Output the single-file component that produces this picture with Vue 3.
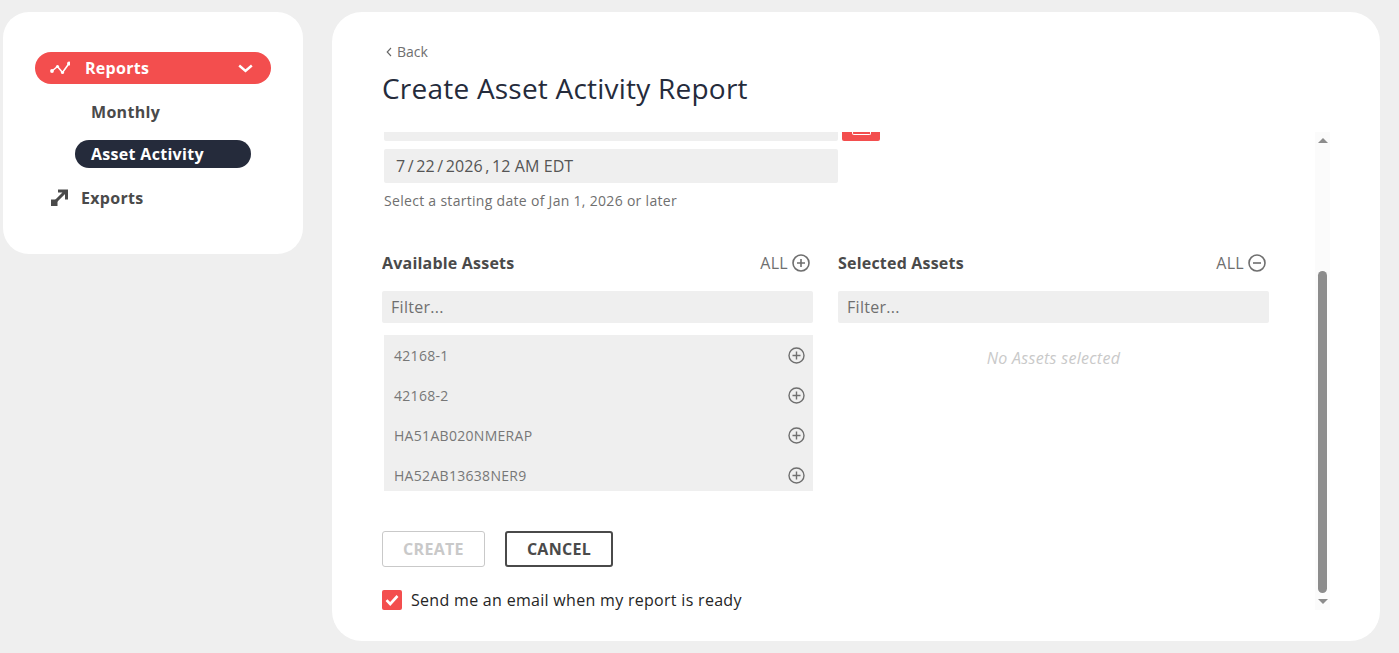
<script setup>
const assets = ['42168-1', '42168-2', 'HA51AB020NMERAP', 'HA52AB13638NER9']
const dateParts = ['7', '/', '22', '/', '2026', ',', '12 AM EDT']
</script>

<template>
  <div class="page">
    <aside class="side">
      <div class="nav-main">
        <svg class="trend" width="20" height="14" viewBox="0 0 20 14">
          <path d="M2 10 7.500 5.500l5 6L19 2.500" fill="none" stroke="#fff" stroke-width="1.600" />
          <circle cx="2" cy="10" r="1.900" fill="#fff" />
          <circle cx="7.500" cy="5.500" r="1.600" fill="#fff" />
          <circle cx="12.500" cy="11.500" r="1.600" fill="#fff" />
          <circle cx="19" cy="2.500" r="1.900" fill="#fff" />
        </svg>
        <span class="nav-main-label">Reports</span>
        <svg class="chev" width="15" height="9" viewBox="0 0 15 9">
          <path d="M1.200 1.500 7.500 7l6.300-5.500" fill="none" stroke="#fff" stroke-width="2.400" />
        </svg>
      </div>
      <div class="sub">Monthly</div>
      <div class="sub active">Asset Activity</div>
      <div class="nav-item">
        <svg width="18" height="18" viewBox="0 0 18 18">
          <rect x="1" y="10.500" width="6.500" height="6.500" fill="#4a4a4a" />
          <path d="M4 14 15.500 2.500M8 2h8.500v8.500" fill="none" stroke="#4a4a4a" stroke-width="3" />
        </svg>
        <span>Exports</span>
      </div>
    </aside>

    <main class="card">
      <header class="head">
        <a class="back">
          <svg width="6" height="10" viewBox="0 0 6 10"><path d="M5 1 1.200 5 5 9" fill="none" stroke="#666" stroke-width="1.100" /></svg>
          <span>Back</span>
        </a>
        <h1>Create Asset Activity Report</h1>
      </header>

      <div class="body">
        <div class="scroll">
          <div class="top-row">
            <div class="clipped-field"></div>
            <div class="cal"><span class="cal-glyph"></span></div>
          </div>
          <div class="date-field">
            <span v-for="(p, i) in dateParts" :key="i">{{ p }}</span>
          </div>
          <p class="hint">Select a starting date of Jan 1, 2026 or later</p>

          <div class="columns">
            <section class="col">
              <div class="col-head">
                <h2>Available Assets</h2>
                <div class="all">
                  <span>ALL</span>
                  <svg width="18" height="18" viewBox="0 0 18 18">
                    <circle cx="9" cy="9" r="8" fill="none" stroke="#6f6f6f" stroke-width="1.600" />
                    <path d="M5 9h8M9 5v8" stroke="#6f6f6f" stroke-width="1.600" />
                  </svg>
                </div>
              </div>
              <div class="filter">Filter...</div>
              <ul class="list">
                <li v-for="a in assets" :key="a">
                  <span>{{ a }}</span>
                  <svg width="17" height="17" viewBox="0 0 17 17">
                    <circle cx="8.500" cy="8.500" r="7.500" fill="none" stroke="#6f6f6f" stroke-width="1.400" />
                    <path d="M4.500 8.500h8M8.500 4.500v8" stroke="#6f6f6f" stroke-width="1.400" />
                  </svg>
                </li>
              </ul>
            </section>
            <section class="col">
              <div class="col-head">
                <h2>Selected Assets</h2>
                <div class="all minus">
                  <span>ALL</span>
                  <svg width="18" height="18" viewBox="0 0 18 18">
                    <circle cx="9" cy="9" r="8" fill="none" stroke="#6f6f6f" stroke-width="1.600" />
                    <path d="M5 9h8" stroke="#6f6f6f" stroke-width="1.600" />
                  </svg>
                </div>
              </div>
              <div class="filter">Filter...</div>
              <div class="empty">No Assets selected</div>
            </section>
          </div>

          <div class="actions">
            <button class="btn create" type="button">CREATE</button>
            <button class="btn cancel" type="button">CANCEL</button>
          </div>
          <label class="check">
            <span class="box">
              <svg width="14" height="12" viewBox="0 0 14 12"><path d="M1.500 6.200 5.200 10 12.500 2" fill="none" stroke="#fff" stroke-width="2.600" /></svg>
            </span>
            <span>Send me an email when my report is ready</span>
          </label>
        </div>

        <div class="bar">
          <span class="arrow up"></span>
          <div class="bar-track"><div class="thumb"></div></div>
          <span class="arrow down"></span>
        </div>
      </div>
    </main>
  </div>
</template>

<style scoped>
.page {
  display: flex;
  align-items: flex-start;
  height: 653px;
  box-sizing: border-box;
  padding: 12px 19px 12px 3px;
  gap: 29px;
  background: #efefef;
  font-family: "Open Sans", "Noto Sans", sans-serif;
  color: #4a4a4a;
  letter-spacing: 0.3px;
  overflow: hidden;
}
.side {
  width: 300px;
  height: 242px;
  flex: none;
  box-sizing: border-box;
  padding: 40px 32px 0;
  background: #fff;
  border-radius: 26px;
}
.nav-main {
  display: flex;
  align-items: center;
  height: 32px;
  border-radius: 16px;
  background: #f34e4e;
  color: #fff;
  font-weight: 700;
  font-size: 16px;
  padding: 0 18px 0 15px;
}
.nav-main-label { margin-left: 15px; flex: 1; }
.sub {
  font-size: 16px;
  font-weight: 700;
  line-height: 28px;
  height: 28px;
  margin: 14px 20px 0 40px;
  padding-left: 16px;
  border-radius: 14px;
}
.sub.active {
  background: #252b3b;
  color: #fff;
}
.nav-item {
  display: flex;
  align-items: center;
  gap: 13px;
  font-size: 16px;
  font-weight: 700;
  margin: 16px 0 0 15px;
  height: 28px;
}
.card {
  flex: 1;
  height: 629px;
  box-sizing: border-box;
  padding: 30px 50px 30px 50px;
  background: #fff;
  border-radius: 30px;
  display: flex;
  flex-direction: column;
}
.head { height: 90px; flex: none; }
.back {
  display: flex;
  align-items: center;
  gap: 5px;
  margin-left: 4px;
  font-size: 14px;
  line-height: 20px;
  letter-spacing: 0;
  color: #6f6f6f;
}
h1 {
  margin: 7px 0 0;
  font-size: 28px;
  line-height: 38px;
  font-weight: 400;
  letter-spacing: 0.22px;
  color: #252b3b;
}
.body {
  flex: 1;
  display: flex;
  min-height: 0;
}
.scroll {
  width: 933px;
  flex: none;
  overflow: hidden;
}
.top-row {
  display: flex;
  height: 9px;
  gap: 4px;
  margin-left: 2px;
}
.clipped-field {
  width: 454px;
  background: #efefef;
  border-radius: 0 0 2px 2px;
}
.cal {
  width: 38px;
  background: #f34e4e;
  border-radius: 0 0 2px 2px;
  display: flex;
  justify-content: center;
}
.cal-glyph {
  width: 17px;
  height: 2px;
  border: 1.500px solid #fff;
  border-top: 0;
  border-radius: 0 0 2px 2px;
}
.date-field {
  display: flex;
  gap: 2.500px;
  width: 454px;
  height: 34px;
  box-sizing: border-box;
  margin: 8px 0 0 2px;
  padding-left: 12px;
  background: #efefef;
  border-radius: 2px;
  font-size: 16px;
  line-height: 34px;
  letter-spacing: 0.1px;
  color: #555;
}
.hint {
  margin: 8px 0 0 2px;
  font-size: 14px;
  line-height: 20px;
  color: #6f6f6f;
}
.columns {
  display: flex;
  gap: 25px;
  margin-top: 40px;
  width: 887px;
}
.col { width: 431px; flex: none; }
.col-head {
  display: flex;
  justify-content: space-between;
  align-items: center;
  height: 24px;
}
h2 {
  margin: 0;
  font-size: 16px;
  line-height: 24px;
  font-weight: 700;
  letter-spacing: 0.2px;
  color: #4a4a4a;
}
.all {
  display: flex;
  align-items: center;
  gap: 4px;
  margin-right: 3px;
  font-size: 16px;
  color: #6f6f6f;
}
.filter {
  height: 32px;
  box-sizing: border-box;
  margin-top: 16px;
  padding-left: 9px;
  background: #efefef;
  border-radius: 2px;
  font-size: 16px;
  line-height: 32px;
  color: #6f6f6f;
}
.list {
  list-style: none;
  height: 156px;
  margin: 12px 0 0 2px;
  padding: 0;
  background: #efefef;
  overflow: hidden;
}
.list li {
  display: flex;
  align-items: center;
  justify-content: space-between;
  height: 40px;
  padding: 0 8px 0 10px;
  font-size: 14px;
  color: #777;
}
.empty {
  margin-top: 23px;
  text-align: center;
  font-size: 16px;
  line-height: 24px;
  font-style: italic;
  color: #c9c9c9;
}
.actions {
  display: flex;
  gap: 20px;
  margin-top: 40px;
}
.btn {
  height: 36px;
  box-sizing: border-box;
  border-radius: 3px;
  background: #fff;
  font-family: inherit;
  font-size: 16px;
  font-weight: 700;
  letter-spacing: 0.3px;
  padding: 0;
}
.create {
  width: 103px;
  border: 1px solid #c9c9c9;
  color: #c9c9c9;
}
.cancel {
  width: 108px;
  border: 2px solid #4a4a4a;
  color: #4a4a4a;
}
.check {
  display: flex;
  align-items: center;
  gap: 9px;
  margin-top: 23px;
  font-size: 16px;
  line-height: 20px;
  color: #252525;
}
.box {
  width: 20px;
  height: 20px;
  background: #f34e4e;
  border-radius: 2px;
  display: flex;
  align-items: center;
  justify-content: center;
}
.bar {
  width: 15px;
  height: 478px;
  flex: none;
  background: #fbfbfb;
  display: flex;
  flex-direction: column;
  align-items: center;
  box-sizing: border-box;
  padding: 6px 0;
}
.arrow {
  width: 0;
  height: 0;
  flex: none;
  border-left: 5px solid transparent;
  border-right: 5px solid transparent;
}
.up { border-bottom: 5px solid #8c8c8c; }
.down { border-top: 5px solid #8c8c8c; }
.bar-track {
  flex: 1;
  width: 9px;
  display: flex;
  flex-direction: column;
  justify-content: flex-end;
  padding: 0 0 6px;
}
.thumb {
  height: 322px;
  background: #8c8c8c;
  border-radius: 5px;
}
</style>

<style>
html, body { margin: 0; background: #efefef; }
</style>
